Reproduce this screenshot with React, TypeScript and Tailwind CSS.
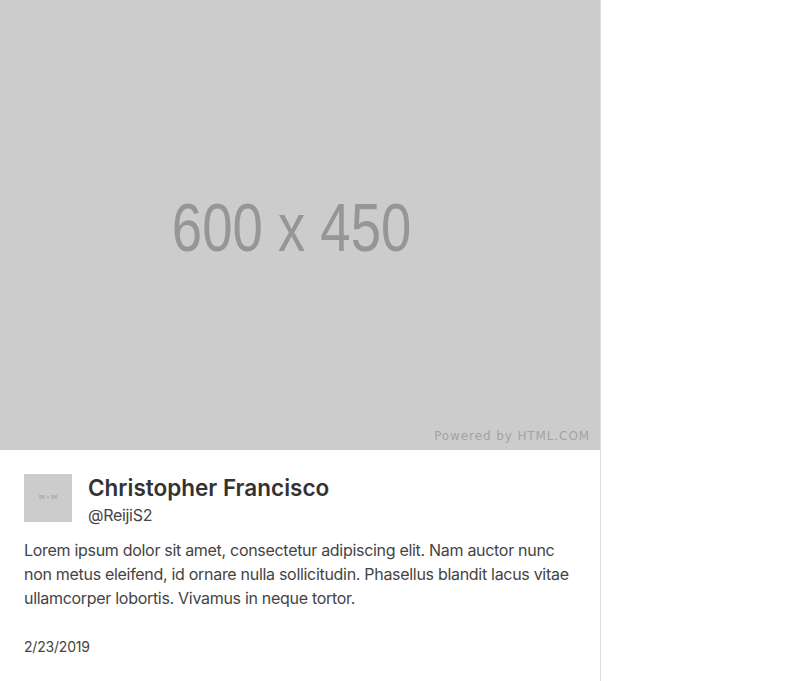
export default function App() {
  return (
    <div className="min-h-screen bg-white font-['Inter','Noto_Sans',sans-serif]">
      <div className="w-[601px] border-r border-[#dddddd] bg-white">
        <div className="relative flex h-[450px] w-[600px] items-center justify-center bg-[#cccccc]">
          <span className="ml-[-16px] mt-[4px] scale-x-[0.79] font-['Liberation_Sans',sans-serif] text-[69px] leading-none text-[#969696]">
            600 x 450
          </span>
          <span className="absolute bottom-[5px] right-[10px] font-['DejaVu_Sans',sans-serif] text-[12px] tracking-[0.9px] text-[#a3a3a3]">
            Powered by HTML.COM
          </span>
        </div>
        <div className="p-6 pb-8">
          <div className="flex gap-4">
            <div className="flex h-12 w-12 shrink-0 items-center justify-center bg-[#cccccc] text-[5px] text-[#999]">
              96 x 96
            </div>
            <div>
              <div className="text-[22.5px] font-semibold leading-7 text-[#333333]">
                Christopher Francisco
              </div>
              <div className="mt-px text-[16px] leading-6 tracking-[-0.3px] text-[#444444]">@ReijiS2</div>
            </div>
          </div>
          <p className="mt-[11px] text-[16px] leading-6 tracking-[-0.3px] text-[#444444]">
            Lorem ipsum dolor sit amet, consectetur adipiscing elit. Nam auctor nunc non metus eleifend, id ornare nulla sollicitudin. Phasellus blandit lacus vitae ullamcorper lobortis. Vivamus in neque tortor.
          </p>
          <div className="mt-[27px] text-[14px] leading-5 tracking-[-0.2px] text-[#444444]">2/23/2019</div>
        </div>
      </div>
    </div>
  );
}
